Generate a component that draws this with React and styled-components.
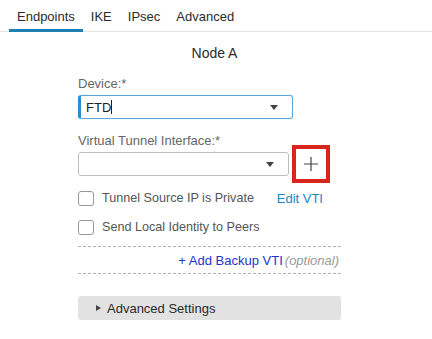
import styled, { createGlobalStyle } from "styled-components";

const Global = createGlobalStyle`
  body {
    margin: 0;
    background: #fff;
    font-family: "Liberation Sans", Arial, sans-serif;
  }
`;

export default function App() {
  return (
    <>
      <Global />
      <Page>
        <Tabs>
          <Tab active>Endpoints</Tab>
          <Tab>IKE</Tab>
          <Tab>IPsec</Tab>
          <Tab>Advanced</Tab>
        </Tabs>
        <Form>
          <Title>Node A</Title>
          <Label top={15}>Device:*</Label>
          <Row>
            <Select focused>
              <span>
                FTD<Caret />
              </span>
              <Arrow />
            </Select>
          </Row>
          <Label top={14}>Virtual Tunnel Interface:*</Label>
          <Row>
            <Select narrow>
              <span />
              <Arrow />
            </Select>
            <AddBox>
              <svg width="14" height="14" viewBox="0 0 14 14">
                <path d="M7 0v14M0 7h14" stroke="#444" strokeWidth="1.2" />
              </svg>
            </AddBox>
          </Row>
          <CheckRow top={14}>
            <Box />
            <CheckText>Tunnel Source IP is Private</CheckText>
            <Link>Edit VTI</Link>
          </CheckRow>
          <CheckRow top={13}>
            <Box />
            <CheckText>Send Local Identity to Peers</CheckText>
          </CheckRow>
          <Backup>
            <BackupLink>+ Add Backup VTI</BackupLink>
            <Optional>(optional)</Optional>
          </Backup>
          <Collapse>
            <Tri />
            Advanced Settings
          </Collapse>
        </Form>
      </Page>
    </>
  );
}

const Page = styled.div`
  width: 432px;
  height: 339px;
  background: #fff;
  overflow: hidden;
`;

const Tabs = styled.div`
  display: flex;
  padding-left: 9px;
  height: 31px;
  border-bottom: 1px solid #e4e4e4;
`;

const Tab = styled.div`
  padding: 9px 8px 0 8px;
  font-size: 13px;
  color: #2b2b2b;
  border-bottom: 3px solid ${(p) => (p.active ? "#1e7fb0" : "transparent")};
  margin-bottom: -1px;
`;

const Form = styled.div`
  width: 263px;
  margin-left: 78px;
  display: flex;
  flex-direction: column;
`;

const Title = styled.div`
  text-align: center;
  font-size: 14px;
  color: #2b2b2b;
  margin-top: 13px;
  margin-left: 10px;
`;

const Label = styled.div`
  font-size: 13px;
  color: #666;
  margin-top: ${(p) => p.top}px;
  margin-bottom: 4px;
`;

const Row = styled.div`
  display: flex;
  align-items: center;
  gap: 3px;
`;

const Select = styled.div`
  box-sizing: border-box;
  width: ${(p) => (p.narrow ? 211 : 215)}px;
  height: 24px;
  display: flex;
  align-items: center;
  justify-content: space-between;
  padding: 0 14px 0 5px;
  font-size: 13px;
  color: #222;
  border: 1px solid ${(p) => (p.focused ? "#5aa6d6" : "#bdbdbd")};
  border-left: ${(p) => (p.focused ? "3px solid #2a8fd0" : "1px solid #bdbdbd")};
  border-radius: 3px;
  box-shadow: ${(p) => (p.focused ? "0 0 1px #8cc4ea" : "none")};
`;

const Caret = styled.i`
  display: inline-block;
  width: 1px;
  height: 14px;
  background: #222;
  vertical-align: -2px;
`;

const Arrow = styled.i`
  width: 0;
  height: 0;
  border-left: 4px solid transparent;
  border-right: 4px solid transparent;
  border-top: 5px solid #444;
`;

const AddBox = styled.div`
  box-sizing: border-box;
  width: 38px;
  height: 38px;
  border: 4px solid #d8261c;
  display: flex;
  align-items: center;
  justify-content: center;
  margin: -7px 0;
`;

const CheckRow = styled.div`
  display: flex;
  align-items: center;
  margin-top: ${(p) => p.top}px;
  height: 16px;
`;

const Box = styled.span`
  box-sizing: border-box;
  width: 16px;
  height: 15px;
  border: 1px solid #999;
  border-radius: 3px;
  margin-right: 8px;
`;

const CheckText = styled.span`
  font-size: 12.6px;
  color: #555;
`;

const Link = styled.span`
  margin-left: auto;
  margin-right: 18px;
  font-size: 13px;
  color: #1b86c6;
`;

const Backup = styled.div`
  margin-top: 11px;
  height: 26px;
  border-top: 1px dashed #b5b5b5;
  border-bottom: 1px dashed #b5b5b5;
  display: flex;
  align-items: center;
  justify-content: flex-end;
  padding-right: 2px;
  font-size: 13px;
`;

const BackupLink = styled.span`
  color: #2233cc;
  margin-right: 2px;
`;

const Optional = styled.span`
  color: #999;
  font-style: italic;
`;

const Collapse = styled.div`
  margin-top: 22px;
  width: 263px;
  height: 24px;
  box-sizing: border-box;
  background: #e2e2e2;
  border-radius: 3px;
  display: flex;
  align-items: center;
  padding-left: 18px;
  font-size: 13px;
  color: #2b2b2b;
`;

const Tri = styled.i`
  width: 0;
  height: 0;
  border-top: 3.5px solid transparent;
  border-bottom: 3.5px solid transparent;
  border-left: 5px solid #444;
  margin-right: 6px;
`;
